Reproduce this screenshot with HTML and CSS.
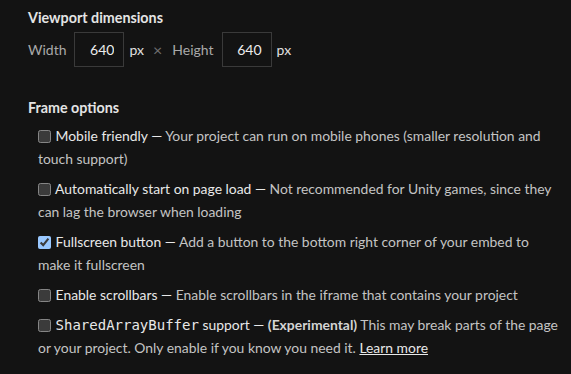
FILE: index.html
```html
<!DOCTYPE html>
<html>
<head>
<meta charset="utf-8">
<link rel="stylesheet" href="styles.css">
</head>
<body>
<div class="page">
  <section class="group">
    <h3 class="group-title">Viewport dimensions</h3>
    <div class="dims">
      <span class="dim-label">Width</span>
      <input class="dim-input" type="text" value="640">
      <span class="unit">px</span>
      <span class="times">×</span>
      <span class="dim-label">Height</span>
      <input class="dim-input" type="text" value="640">
      <span class="unit">px</span>
    </div>
  </section>

  <section class="group frame">
    <h3 class="group-title">Frame options</h3>
    <div class="options">
      <label class="opt"><input class="check" type="checkbox"> <span class="opt-name">Mobile friendly</span> — <span class="sub">Your project can run on mobile phones (smaller resolution and touch support)</span></label>
      <label class="opt"><input class="check" type="checkbox"> <span class="opt-name">Automatically start on page load</span> — <span class="sub">Not recommended for Unity games, since they can lag the browser when loading</span></label>
      <label class="opt"><input class="check" type="checkbox" checked> <span class="opt-name">Fullscreen button</span> — <span class="sub">Add a button to the bottom right corner of your embed to make it fullscreen</span></label>
      <label class="opt"><input class="check" type="checkbox"> <span class="opt-name">Enable scrollbars</span> — <span class="sub">Enable scrollbars in the iframe that contains your project</span></label>
      <label class="opt"><input class="check" type="checkbox"> <code class="mono">SharedArrayBuffer</code> <span class="opt-name">support</span> — <span class="sub"><strong class="exp">(Experimental)</strong> This may break parts of the page or your project. Only enable if you know you need it. <a class="learn" href="#">Learn more</a></span></label>
    </div>
  </section>
</div>
</body>
</html>
```

FILE: styles.css
```css
html, body {
  margin: 0;
  padding: 0;
  background: #131313;
}
body {
  font-family: Lato, "Open Sans", sans-serif;
  font-size: 14px;
  color: #d6d6d6;
}
.page {
  padding: 8px 8px 0 28px;
}
.group-title {
  margin: 0;
  font-size: 14.3px;
  font-weight: 700;
  line-height: 20px;
  color: #e4e4e4;
}
.dims {
  display: flex;
  align-items: center;
  margin-top: 4px;
}
.dim-label {
  color: #a9a9a9;
  margin-right: 8px;
}
.dim-input {
  width: 50px;
  height: 35px;
  box-sizing: border-box;
  background: #131313;
  border: 1px solid #3a3a3a;
  color: #ececec;
  font-family: Lato, sans-serif;
  font-size: 14px;
  text-align: right;
  padding: 0 9px 0 4px;
  margin: 0 5px 0 0;
  outline: none;
}
.unit {
  color: #e0e0e0;
}
.times {
  color: #6f6f6f;
  font-size: 16px;
  margin: 0 10px 0 9px;
}
.frame {
  margin-top: 31px;
}
.options {
  padding-left: 10px;
  margin-top: 6px;
  width: 525px;
}
.opt {
  display: block;
  font-size: 13.9px;
  line-height: 23px;
  margin-bottom: 7px;
  color: #e8e8e8;
}
.check {
  color-scheme: dark;
  width: 13px;
  height: 13px;
  margin: 0 1px 0 0;
  vertical-align: -2px;
}
.sub {
  color: #c4c4c4;
}
.mono {
  font-family: "DejaVu Sans Mono", monospace;
  font-size: 14px;
  line-height: 1;
  color: #e8e8e8;
}
.exp {
  font-weight: 700;
  color: #d4d4d4;
}
.learn {
  color: #e8e8e8;
  text-decoration: underline;
}
```
